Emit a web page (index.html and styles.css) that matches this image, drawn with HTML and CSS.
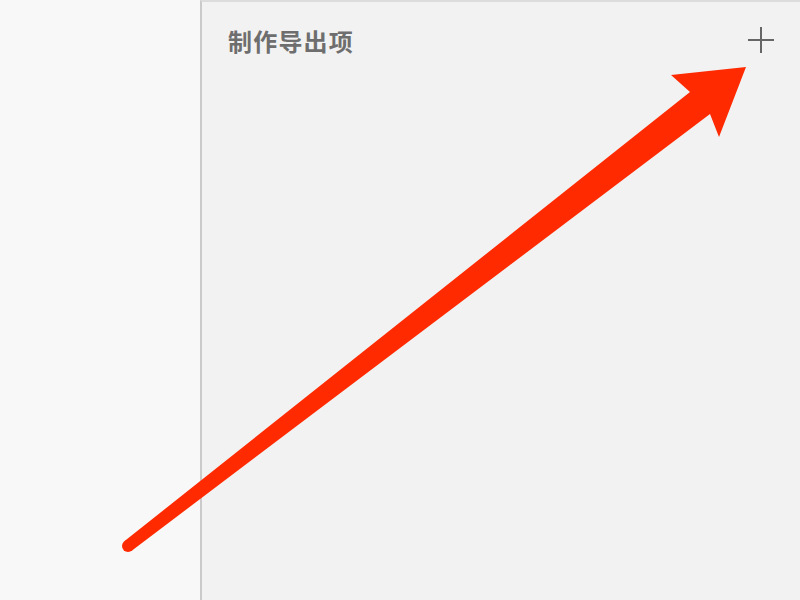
FILE: index.html
```html
<!DOCTYPE html>
<html lang="zh">
<head>
<meta charset="utf-8">
<link rel="stylesheet" href="styles.css">
</head>
<body>
<div class="page">
  <div class="side"></div>
  <div class="panel">
    <div class="header">
      <span class="title">制作导出项</span>
      <svg class="plus" width="28" height="28" viewBox="0 0 28 28"><path d="M1 14H27M14 1V27" stroke="#666" stroke-width="2" fill="none"/></svg>
    </div>
  </div>
</div>
<svg class="arrow" width="800" height="600" viewBox="0 0 800 600">
  <polygon fill="#ff2a00" points="124.3,541.3 690,92 671,75 746,67 719,137 710,114 131.7,550.7"/>
  <circle cx="128" cy="546" r="6" fill="#ff2a00"/>
</svg>
</body>
</html>
```
FILE: styles.css
```css
html, body {
  margin: 0;
  padding: 0;
  width: 800px;
  height: 600px;
  overflow: hidden;
  background: #f8f8f8;
}
.page {
  display: flex;
  width: 800px;
  height: 600px;
}
.side {
  width: 200px;
  flex: none;
  background: #f8f8f8;
}
.panel {
  flex: 1;
  background: #f2f2f2;
  border-left: 2px solid #cacaca;
  border-top: 2px solid #dcdcdc;
}
.header {
  display: flex;
  justify-content: space-between;
  align-items: flex-start;
  padding: 25px 25px 0 26px;
}
.title {
  font-family: "Noto Sans CJK SC", "Noto Sans", sans-serif;
  font-size: 24px;
  line-height: 28px;
  font-weight: 700;
  color: #6e6e6e;
  letter-spacing: 1.2px;
}
.plus {
  display: block;
  margin-top: -1px;
}
.arrow {
  position: absolute;
  left: 0;
  top: 0;
}
```
